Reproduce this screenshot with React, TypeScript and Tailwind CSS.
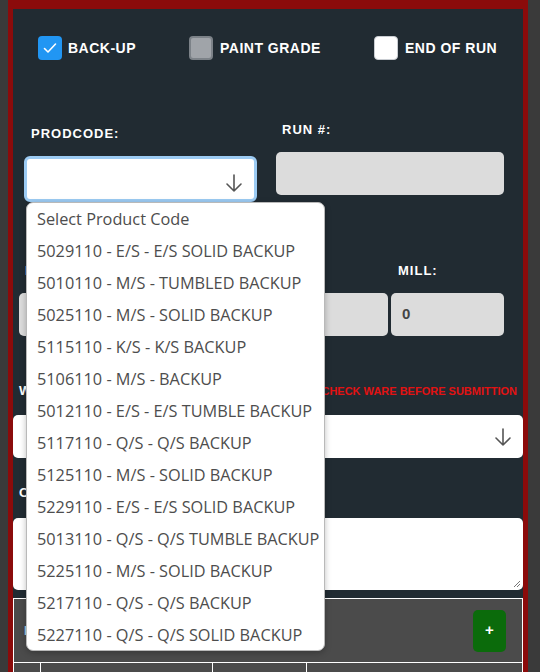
import React from "react";

const items = [
  "5029110 - E/S - E/S SOLID BACKUP",
  "5010110 - M/S - TUMBLED BACKUP",
  "5025110 - M/S - SOLID BACKUP",
  "5115110 - K/S - K/S BACKUP",
  "5106110 - M/S - BACKUP",
  "5012110 - E/S - E/S TUMBLE BACKUP",
  "5117110 - Q/S - Q/S BACKUP",
  "5125110 - M/S - SOLID BACKUP",
  "5229110 - E/S - E/S SOLID BACKUP",
  "5013110 - Q/S - Q/S TUMBLE BACKUP",
  "5225110 - M/S - SOLID BACKUP",
  "5217110 - Q/S - Q/S BACKUP",
  "5227110 - Q/S - Q/S SOLID BACKUP",
];

const Arrow = ({ className }: { className?: string }) => (
  <svg className={className} width="20" height="20" viewBox="0 0 20 20" fill="none" stroke="#555" strokeWidth="1.6" strokeLinecap="round" strokeLinejoin="round">
    <path d="M10 2v16M3 11l7 7 7-7" />
  </svg>
);

const lbl = "font-['Liberation_Sans',Arial,sans-serif] font-bold text-white";

export default function App() {
  return (
    <div className="w-[540px] h-[672px] overflow-hidden bg-[#3a3a3a] pl-[8px] pr-[12px]">
      <div className="h-full border-[#8b0b0b] border-l-[5px] border-r-[5px] border-t-[9px] bg-[#212b32] relative">
        {/* checkbox row */}
        <div className="flex items-center pt-[27px] pl-[25px]">
          <div className="flex items-center gap-[6px] w-[151px]">
            <div className="w-[24px] h-[24px] rounded-[4px] bg-[#2196f3] flex items-center justify-center">
              <svg width="16" height="16" viewBox="0 0 16 16" fill="none" stroke="white" strokeWidth="1.6" strokeLinecap="round" strokeLinejoin="round">
                <path d="M2.5 8.5l3.5 3.5 7.5-8" />
              </svg>
            </div>
            <span className={`${lbl} text-[14px] tracking-[0.5px]`}>BACK-UP</span>
          </div>
          <div className="flex items-center gap-[7px] w-[185px]">
            <div className="w-[24px] h-[24px] rounded-[4px] bg-[#a0a4a9] border-2 border-[#7c8288]" />
            <span className={`${lbl} text-[14px] tracking-[0.5px]`}>PAINT GRADE</span>
          </div>
          <div className="flex items-center gap-[7px]">
            <div className="w-[24px] h-[24px] rounded-[4px] bg-white border border-[#c9cdd2]" />
            <span className={`${lbl} text-[14px] tracking-[0.5px]`}>END OF RUN</span>
          </div>
        </div>

        {/* prodcode / run */}
        <div className="flex pl-[11px] gap-[19px]">
          <div className="w-[233px]">
            <div className={`${lbl} text-[13px] leading-[15px] tracking-[1px] mt-[66px] ml-[7px]`}>PRODCODE:</div>
            <div className="mt-[15px] h-[46px] rounded-[6px] border-[3px] border-[#9ccbf3] bg-white flex items-end justify-end pr-[10px] pb-[6px]">
              <Arrow />
            </div>
          </div>
          <div className="w-[228px]">
            <div className={`${lbl} text-[13px] leading-[15px] tracking-[1px] mt-[62px] ml-[6px]`}>RUN #:</div>
            <div className="mt-[15px] h-[43px] rounded-[5px] bg-[#dcdcdc]" />
          </div>
        </div>

        {/* row 2 */}
        <div className="flex pl-[6px] pr-[19px] gap-[3px] mt-[61px]">
          <div className="w-[182px]">
            <div className={`${lbl} text-[13px] leading-[15px] tracking-[1px] ml-[6px] text-[#9fd0e6]`}>DATE:</div>
            <div className="mt-[15px] h-[43px] rounded-[5px] bg-[#dcdcdc]" />
          </div>
          <div className="w-[184px]">
            <div className={`${lbl} text-[13px] leading-[15px] tracking-[1px] ml-[6px]`}>SHIFT:</div>
            <div className="mt-[15px] h-[43px] rounded-[5px] bg-[#dcdcdc]" />
          </div>
          <div className="flex-1">
            <div className={`${lbl} text-[13px] leading-[15px] tracking-[1px] ml-[7px]`}>MILL:</div>
            <div className="mt-[15px] h-[43px] rounded-[5px] bg-[#dcdcdc] flex items-center pl-[11px]">
              <span className="font-['Liberation_Sans',Arial,sans-serif] font-bold text-[15px] text-[#444]">0</span>
            </div>
          </div>
        </div>

        {/* ware */}
        <div className="mt-[47px] flex items-end justify-between pl-[6px] pr-[6px]">
          <span className={`${lbl} text-[13px] leading-[15px] tracking-[1px]`}>WARE:</span>
          <span className="font-['Liberation_Sans',Arial,sans-serif] font-bold text-[11px] leading-[13px] text-[#e21212]">CHECK WARE BEFORE SUBMITTION</span>
        </div>
        <div className="mt-[17px] h-[43px] rounded-[5px] bg-white flex items-center justify-end pr-[10px]">
          <Arrow />
        </div>

        {/* comments */}
        <div className={`${lbl} text-[13px] leading-[15px] tracking-[1px] ml-[6px] mt-[27px]`}>COMMENTS:</div>
        <div className="mt-[18px] h-[72px] rounded-[5px] bg-white relative">
          <svg className="absolute right-[2px] bottom-[2px]" width="9" height="9" viewBox="0 0 9 9" stroke="#777" strokeWidth="1">
            <path d="M8 2L2 8M8 5L5 8" />
          </svg>
        </div>

        {/* table */}
        <div className="mt-[8px] bg-[#4b4b4b] border border-white">
          <div className="h-[63px] flex items-center justify-between pl-[10px] pr-[16px]">
            <span className="font-['Liberation_Sans',Arial,sans-serif] font-bold text-[12px] text-[#9fd0e6]">ITEMS</span>
            <div className="w-[33px] h-[42px] rounded-[5px] bg-[#0b6b0b] flex items-center justify-center">
              <span className="font-['Liberation_Sans',Arial,sans-serif] font-bold text-[15px] text-white">+</span>
            </div>
          </div>
          <div className="flex h-[20px] border-t border-white">
            <div className="w-[27px] border-r border-white" />
            <div className="w-[172px] border-r border-white" />
            <div className="w-[94px] border-r border-white" />
            <div className="flex-1" />
          </div>
        </div>

        {/* dropdown overlay */}
        <div className="absolute left-[13px] top-[193px] w-[299px] h-[449px] bg-white rounded-[7px] border border-[#b9b9b9] shadow-[0_2px_6px_rgba(0,0,0,0.25)] overflow-hidden">
          {["Select Product Code", ...items].map((t, i) => (
            <div key={i} className="h-[32px] flex items-center pl-[10px] whitespace-nowrap font-['Open_Sans','Noto_Sans',sans-serif] text-[16.3px] text-[#4d4d4d]">
              {t}
            </div>
          ))}
        </div>
      </div>
    </div>
  );
}
